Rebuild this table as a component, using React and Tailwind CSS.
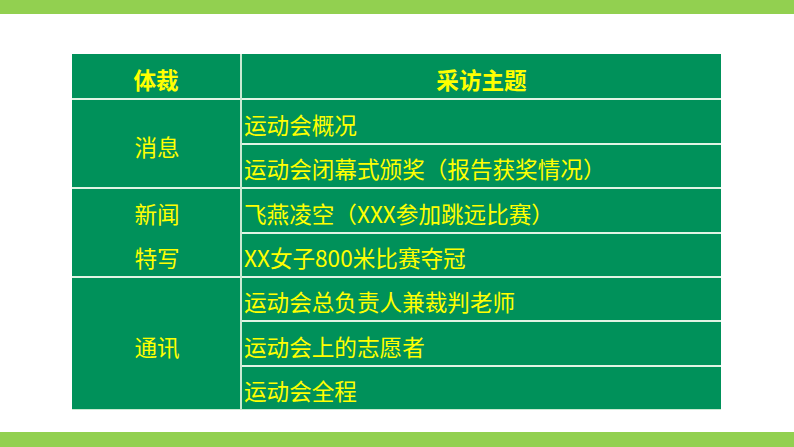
import React from "react";

const groups = [
  { label: ["消息"], items: ["运动会概况", "运动会闭幕式颁奖（报告获奖情况）"] },
  { label: ["新闻", "特写"], items: ["飞燕凌空（XXX参加跳远比赛）", "XX女子800米比赛夺冠"] },
  { label: ["通讯"], items: ["运动会总负责人兼裁判老师", "运动会上的志愿者", "运动会全程"] },
];

const font = { fontFamily: '"Noto Sans CJK SC", "Noto Sans", sans-serif' };

const App = () => {
  return (
    <div className="w-[794px] h-[447px] flex flex-col bg-white overflow-hidden" style={font}>
      <div className="w-full h-[14px] bg-[#92d050]"></div>

      <div className="flex-1 pt-[40px] pl-[72px]">
        <div className="w-[649px] flex flex-col bg-[#00915a] text-[#ffff00] text-[22.6px] leading-none border-b border-[#c9ead2] [text-spacing-trim:space-all]">
          <div className="flex h-[44.4px] font-bold">
            <div className="w-[168px] flex justify-center items-center pt-[8px]">体裁</div>
            <div className="flex-1 flex justify-center items-center pt-[8px] border-l-2 border-[#c9ead2]">采访主题</div>
          </div>

          {groups.map((g, gi) => (
            <div key={gi} className="flex">
              <div className="w-[168px] flex flex-col justify-center items-center gap-[21px] pt-[8px] pl-[2px] border-t-2 border-[#e0f4e4]">
                {g.label.map(l => <span key={l}>{l}</span>)}
              </div>
              <div className="flex-1 flex flex-col border-l-2 border-[#c9ead2]">
                {g.items.map(t => (
                  <div key={t} className="h-[44.4px] flex items-center pl-[2px] pt-[7px] border-t-2 border-[#e0f4e4]">
                    {t}
                  </div>
                ))}
              </div>
            </div>
          ))}
        </div>
      </div>

      <div className="w-full h-[15px] bg-[#92d050]"></div>
    </div>
  );
};

export default App;
